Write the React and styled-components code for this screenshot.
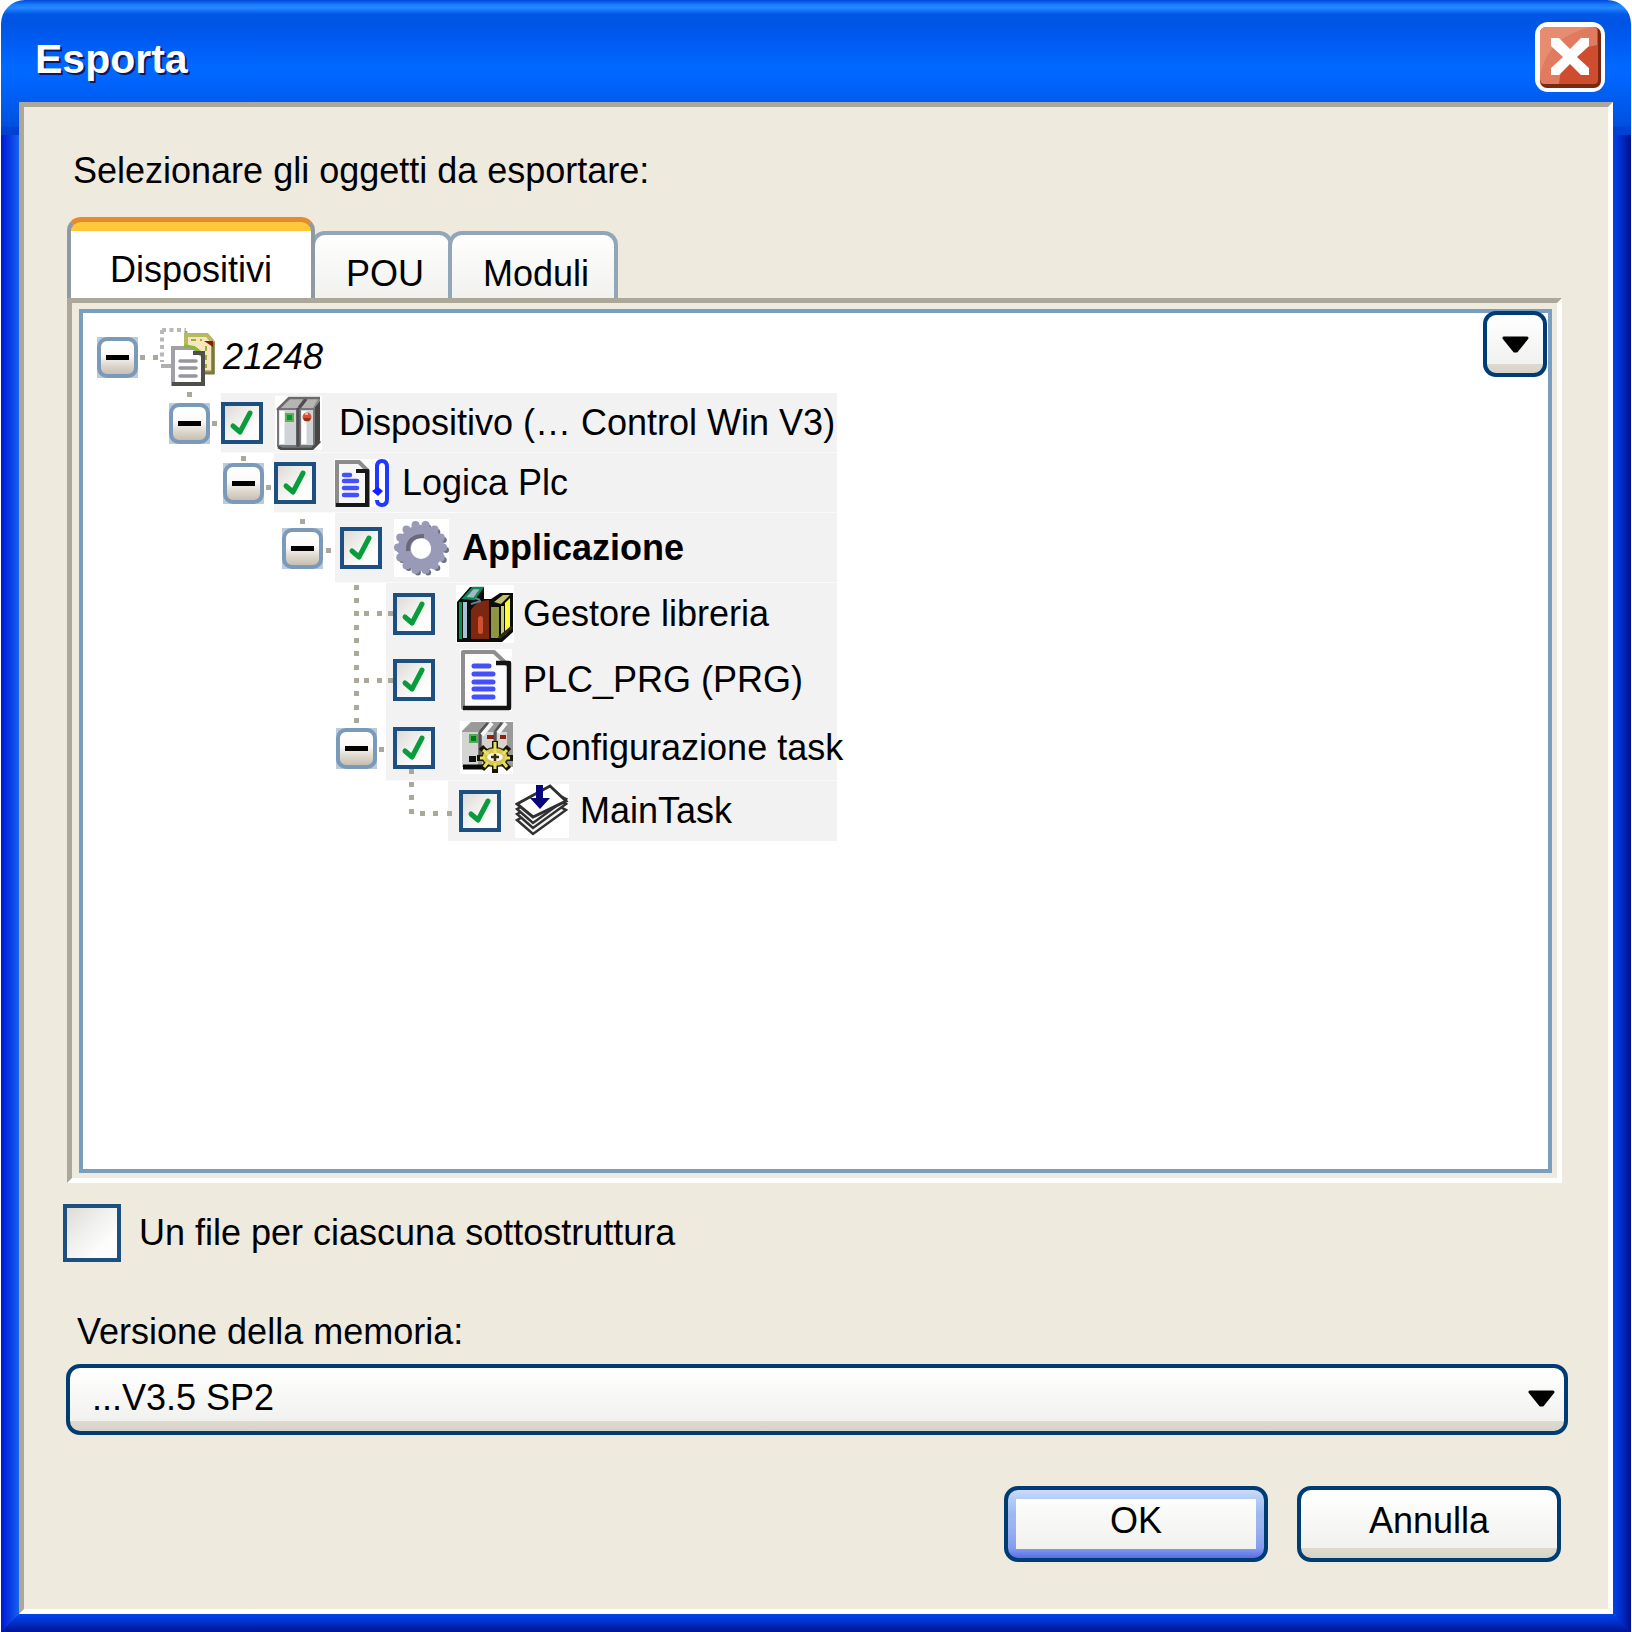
import React, { useState } from "react";
import styled, { createGlobalStyle } from "styled-components";

const Global = createGlobalStyle`
  *, *::before, *::after { box-sizing: border-box; }
  body { margin: 0; background: #fff; }
  body, button, select, input {
    font-family: "Liberation Sans", Arial, sans-serif;
    font-size: 36px;
    line-height: 48px;
    color: #000;
  }
`;

const Window = styled.main`
  position: relative;
  display: flex;
  flex-direction: column;
  min-height: 100vh;
  margin: 0 1px;
  padding: 0 18px 18px;
  border-radius: 24px 24px 0 0;
  background:
    linear-gradient(#0048d8, #1c80ff 5px, #2488ff 8px, #0058e6 14px, #0054e3 22px, #005cf4 44px, #0068ff 66px, #0066ff 78px, #005cf0 100px, #0050e0 126px, #0044d6 127px, #0040d0 135px) top / 100% 135px no-repeat,
    linear-gradient(#0045ee, #002cc0 10px, #001390) bottom / 100% 18px no-repeat;
  &::before, &::after {
    content: "";
    position: absolute;
    top: 135px;
    bottom: 0;
    width: 18px;
  }
  &::before {
    left: 0;
    background: linear-gradient(to right, #0018d4, #0b3ee4 10px, #1464f0);
    clip-path: polygon(0 0, 100% 0, 100% calc(100% - 18px), 0 100%);
  }
  &::after {
    right: 0;
    background: linear-gradient(to right, #0042ea, #0028c0 10px, #001088);
    clip-path: polygon(0 0, 100% 0, 100% 100%, 0 calc(100% - 18px));
  }
`;

const TitleBar = styled.header`
  display: flex;
  align-items: center;
  justify-content: space-between;
  height: 102px;
  padding: 12px 8px 0 16px;
`;

const Title = styled.h1`
  margin: 0;
  padding-top: 4px;
  font-size: 41px;
  line-height: 56px;
  font-weight: bold;
  color: #fff;
  text-shadow: 2px 2px 0 #0a1a60;
`;

const CloseButton = styled.button`
  display: block;
  width: 70px;
  height: 70px;
  padding: 0;
  border: 0;
  background: none;
  svg { display: block; }
`;

const Body = styled.section`
  flex: 1;
  display: flex;
  flex-direction: column;
  border: 5px solid;
  border-color: #aca899 #fff #fff #aca899;
  background: #eeeade;
  padding: 40px 40px 47px 39px;
`;

const Inset = styled.div`
  display: flex;
  flex-direction: column;
  flex: 1;
  padding: 0 6px 0 4px;
`;

const Prompt = styled.p`
  margin: 0 0 22px;
  padding-left: 6px;
`;

const Tabs = styled.div`
  display: flex;
  align-items: flex-end;
  height: 81px;
`;

const Tab = styled.button`
  height: ${(p) => (p.$active ? 81 : 67)}px;
  width: ${(p) => p.$width}px;
  margin-right: ${(p) => (p.$active ? 0 : -5)}px;
  padding: ${(p) => (p.$active ? "20px 0 0" : "15px 0 0 6px")};
  margin-left: ${(p) => (p.$joined ? -4 : 0)}px;
  border: 4px solid ${(p) => (p.$active ? "#8f99a3" : "#91a7b9")};
  border-bottom: 0;
  border-radius: 14px 14px 0 0;
  white-space: nowrap;
  text-align: center;
  background: linear-gradient(#fff, #fafaf9 30%, #f1f1ee);
  ${(p) =>
    p.$active &&
    `
    position: relative;
    z-index: 1;
    border-top: 5px solid #e68b2c;
    background: linear-gradient(#ffc83c 9px, #fff 9px);
  `}
`;

const Panel = styled.div`
  flex: 1;
  display: flex;
  border: 5px solid;
  border-color: #aca899 #fff #fff #aca899;
  padding: 6px 5px 5px 7px;
`;

const Tree = styled.div`
  position: relative;
  flex: 1;
  border: 4px solid #7a9ebf;
  background: #fff;
  padding-top: 8px;
`;

const Connectors = styled.svg`
  position: absolute;
  left: 0;
  top: 0;
  pointer-events: none;
`;

const Row = styled.div`
  display: flex;
  height: ${(p) => p.$height}px;
`;

const Lead = styled.div`
  display: flex;
  flex: none;
  align-items: center;
  justify-content: flex-end;
  width: ${(p) => p.$width}px;
  padding-right: ${(p) => p.$pad}px;
`;

const Band = styled.div`
  display: flex;
  align-items: center;
  width: ${(p) => p.$width}px;
  padding-left: ${(p) => p.$pad}px;
  background: ${(p) => (p.$plain ? "none" : "#f2f2f2")};
  border-bottom: ${(p) => (p.$line ? "1px solid #fafafa" : "0")};
`;

const IconCell = styled.span`
  flex: none;
  width: ${(p) => p.$width}px;
  margin-left: ${(p) => p.$gap}px;
  margin-right: ${(p) => p.$after}px;
  svg { display: block; width: 100%; height: auto; }
`;

const NodeLabel = styled.label`
  white-space: nowrap;
  font-weight: ${(p) => (p.$bold ? "bold" : "normal")};
  font-style: ${(p) => (p.$italic ? "italic" : "normal")};
`;

const Expander = styled.button`
  display: flex;
  align-items: center;
  justify-content: center;
  width: 41px;
  height: 41px;
  padding: 0;
  border: 4px solid #7b9ab9;
  border-radius: 10px;
  background: linear-gradient(#fff, #faf9f7 45%, #dcd6cc 75%, #c8bfb3);
  &::before {
    content: "";
    width: 23px;
    height: 5px;
    background: #000;
  }
`;

const ExpanderSlot = styled.span`
  display: block;
  background: #bccbdc;
`;

const CheckWrap = styled.span`
  position: relative;
  flex: none;
  display: block;
  width: ${(p) => p.$size}px;
  height: ${(p) => p.$size}px;
  input {
    display: block;
    appearance: none;
    width: 100%;
    height: 100%;
    margin: 0;
    border: 4px solid #1d5080;
    background: linear-gradient(135deg, #dedbd6, #efefec 40%, #fdfdfd 75%);
  }
  svg {
    position: absolute;
    inset: 0;
    pointer-events: none;
  }
`;

const DropButton = styled.button`
  position: absolute;
  top: -2px;
  right: 1px;
  display: flex;
  align-items: center;
  justify-content: center;
  width: 64px;
  height: 66px;
  padding: 0;
  border: 4px solid #003c74;
  border-radius: 13px;
  background: linear-gradient(#fff, #fafafa 30%, #f1f2ee 84%, #dedacf 84%, #d8d3c8);
`;

const Option = styled.div`
  display: flex;
  align-items: center;
  gap: 18px;
  margin-top: 21px;
`;

const FieldLabel = styled.label`
  margin: 46px 0 8px;
  padding-left: 14px;
`;

const SelectWrap = styled.div`
  position: relative;
  margin-left: 3px;
  select {
    display: block;
    appearance: none;
    width: 100%;
    height: 71px;
    padding: 0 60px 4px 22px;
    border: 4px solid #003c74;
    border-radius: 14px;
    background: linear-gradient(#fff 4px, #fafaf9 30%, #f1f2ee 84%, #dedacf 84%, #d8d3c8);
  }
  svg {
    position: absolute;
    right: 13px;
    top: 26px;
    pointer-events: none;
  }
`;

const Actions = styled.footer`
  display: flex;
  justify-content: flex-end;
  gap: 29px;
  margin-top: 51px;
  padding-right: 7px;
`;

const Action = styled.button`
  width: 264px;
  height: 76px;
  padding: 0 0 6px;
  border: 4px solid #003c74;
  border-radius: 14px;
  background: linear-gradient(#fff 6px, #fafaf9 30%, #f1f2ee 86%, #dedacf 86%, #d8d3c8);
  ${(p) =>
    p.$primary &&
    `
    background:
      linear-gradient(#fdfdfd, #fafaf9 20%, #f1f2ee) center / 240px 50px no-repeat,
      linear-gradient(#ccdaf6, #b4ccf6 9px, #9cb8f0 24px, #9cb4f0 36px, #849cf0 58px, #5870e4);
  `}
`;

const Arrow = () => (
  <svg width="27" height="17" viewBox="0 0 27 17" aria-hidden="true">
    <path d="M2 2H25L14.5 15H12.5Z" stroke="#000" strokeWidth="3" strokeLinejoin="round" />
  </svg>
);

const CloseIcon = () => (
  <svg width="70" height="70" viewBox="0 0 70 70" aria-hidden="true">
    <rect width="70" height="70" rx="13" fill="#fff" />
    <rect x="5" y="5" width="61" height="61" rx="7" fill="#7c2810" />
    <path d="M12 5H59Q63 5 63 9V58Q63 62 59 62H8Q5 62 5 56V12Q5 5 12 5Z" fill="#cf4d2f" />
    <path d="M12 5H59Q62 5 62 9V23Q26 28 24 62H9Q5 61 5 56V12Q5 5 12 5Z" fill="#e27a60" />
    <path d="M12 5H56Q12 15 5 54V12Q5 5 12 5Z" fill="#e68c70" />
    <path d="M16 16H24L35 27L46 16H54V24L42 35L54 46V53H46L35 42L24 53H16V46L28 35L16 24Z" fill="#fff" />
  </svg>
);

const Tick = () => (
  <svg width="41" height="41" viewBox="0 0 41 41" aria-hidden="true">
    <path d="M12 24L19 30L29 11" fill="none" stroke="#089c3c" strokeWidth="5" strokeLinecap="round" strokeLinejoin="round" />
  </svg>
);

const ProjectIcon = () => (
  <svg viewBox="0 0 56 58">
    <path d="M2 2H26M2 2V34" stroke="#b8b8b8" strokeWidth="4" strokeDasharray="4 3.5" fill="none" />
    <path d="M1 38H11" stroke="#b0b0b0" strokeWidth="4" />
    <path d="M26 3V8" stroke="#9aa888" strokeWidth="3" />
    <path d="M26 7H47L53 14V44H26Z" fill="#f6e6bc" stroke="#b8b860" strokeWidth="4" />
    <path d="M31 12H42M46 18V40" stroke="#98b038" strokeWidth="2" strokeDasharray="5 4" />
    <path d="M53 14V45H42" fill="none" stroke="#7a7450" strokeWidth="3" />
    <path d="M44 13H53V19Z" fill="#802010" />
    <path d="M13 20H34L43 28V56H13Z" fill="#fff" stroke="#a0a0a6" strokeWidth="4" />
    <path d="M24 18Q34 18 40 24" fill="none" stroke="#88b838" strokeWidth="3" />
    <path d="M33 25H43V56H12" fill="none" stroke="#4e4e4a" strokeWidth="4" />
    <path d="M20 33H36M20 40H36M20 48H36" stroke="#96969c" strokeWidth="3.5" strokeLinecap="round" />
  </svg>
);

const DeviceIcon = () => (
  <svg viewBox="0 0 47 54">
    <rect width="47" height="54" fill="#fff" />
    <path d="M3 13L14 2H45V44L38 52H3Z" fill="#8a8a88" />
    <path d="M38 14L45 5V44L38 52Z" fill="#484644" />
    <path d="M5 12L15 3H28L22 12ZM26 12L33 3H43L38 12Z" fill="#b4b4b2" />
    <path d="M3 13H22V50H3ZM25 13H39V50H25Z" fill="#cfd3d6" stroke="#77777b" strokeWidth="2" />
    <path d="M7 15V48M29 15V48" stroke="#fff" strokeWidth="5" />
    <path d="M23 12V51M24 12L31 3" stroke="#4e4e4e" strokeWidth="3" />
    <path d="M3 51L7 53H37L45 45" stroke="#4a4a48" strokeWidth="3" fill="none" />
    <path d="M2 14L14 2H45" stroke="#6a6a68" strokeWidth="2.5" fill="none" />
    <rect x="10" y="17" width="9" height="9" fill="#60b050" />
    <rect x="12" y="19" width="5" height="5" fill="#009838" />
    <circle cx="32" cy="21" r="4.5" fill="#d85030" />
    <path d="M28 22H36L34 25H30Z" fill="#903018" />
    <path d="M30 18H33" stroke="#f4b0a0" strokeWidth="2" />
  </svg>
);

const LogicIcon = () => (
  <svg viewBox="0 0 55 48">
    <rect width="55" height="48" fill="#fff" />
    <path d="M3 3H25L34 12V46H3Z" fill="#f6f6f6" stroke="#8c8c8c" strokeWidth="4" />
    <path d="M22 12H33V46H2" fill="none" stroke="#181818" strokeWidth="4" />
    <path d="M10 16H16M10 22H23M10 29H23M10 36H23" stroke="#4450ff" strokeWidth="4.5" strokeLinecap="round" />
    <path d="M43 31V8Q43 2 48 2Q53 2 53 8V40Q53 46 48 46Q43 46 43 41" fill="none" stroke="#2038ff" strokeWidth="4" />
    <path d="M38 32L44 28L49 32L44 37Z" fill="#1020ff" />
  </svg>
);

const teeth = Array.from({ length: 14 }, (_, i) => (i * Math.PI * 2) / 14);

const GearIcon = () => (
  <svg viewBox="0 0 55 58">
    <rect width="55" height="58" fill="#fff" />
    {teeth.map((a) => (
      <circle key={"s" + a} cx={29 + 23 * Math.cos(a)} cy={31 + 23 * Math.sin(a)} r="3" fill="#6c7080" />
    ))}
    {teeth.map((a) => (
      <circle key={"t" + a} cx={26.5 + 22.5 * Math.cos(a)} cy={28.5 + 23 * Math.sin(a)} r="4" fill="#989ab8" />
    ))}
    <circle cx="27" cy="29" r="16.5" fill="none" stroke="#989ab8" strokeWidth="13" />
    <path d="M14 32Q13 17 30 17" fill="none" stroke="#686a78" strokeWidth="4" />
    <circle cx="27" cy="30" r="10" fill="#fff" />
  </svg>
);

const LibraryIcon = () => (
  <svg viewBox="0 0 58 58">
    <rect width="58" height="58" fill="#fff" />
    <path d="M1 17L14 2H28V14H35L44 8H57V47L46 57H1Z" fill="#0c0c0c" />
    <path d="M8 13L17 3H26L18 14Z" fill="#a0b8c8" stroke="#108858" strokeWidth="2.5" />
    <path d="M3 17H6V54H3Z" fill="#009850" />
    <path d="M7 17H11V53H7Z" fill="#a8c0d8" />
    <path d="M15 25Q21 15 33 15V54H15Z" fill="#7c2810" />
    <rect x="22" y="31" width="5" height="18" rx="2.5" fill="#d05030" />
    <path d="M35 22H43V53H35Z" fill="#8e9444" />
    <path d="M38 17L47 10H54L45 19Z" fill="#c0c070" />
    <path d="M45 21H48V51H45Z" fill="#c8cc70" />
    <path d="M49 18L54 13V44L49 50Z" fill="#ffff30" />
    <path d="M43 53L56 42" stroke="#302810" strokeWidth="3" />
    <path d="M15 19L25 16M19 13L24 15" stroke="#608090" strokeWidth="2" />
  </svg>
);

const DocumentIcon = () => (
  <svg viewBox="0 0 52 62">
    <rect width="52" height="62" fill="#fff" />
    <path d="M3 3H34L49 17V59H3Z" fill="#fcfcff" stroke="#8e8e8e" strokeWidth="4" strokeLinejoin="round" />
    <path d="M36 14H49V59H3" fill="none" stroke="#141414" strokeWidth="4.5" strokeLinejoin="round" />
    <path d="M14 17H29M14 25H33M14 33H33M14 40H33M14 48H33" stroke="#4450ff" strokeWidth="5" strokeLinecap="round" />
  </svg>
);

const TaskConfigIcon = () => (
  <svg viewBox="0 0 53 53">
    <rect width="53" height="53" fill="#fff" />
    <path d="M2 10L11 1H53V46H2Z" fill="#9a9a9a" />
    <path d="M2 11H18V45H2ZM22 11H34V45H22ZM37 11H47V40H37Z" fill="#d4d4d2" />
    <path d="M20 11L28 2M35 11L42 2M20 11V40M35 11V25" stroke="#555" strokeWidth="3" />
    <path d="M22 14L32 2M38 12L46 2" stroke="#f8f8f8" strokeWidth="4" />
    <path d="M3 46H24" stroke="#080808" strokeWidth="5" />
    <path d="M9 38H16" stroke="#101010" strokeWidth="6" />
    <rect x="9" y="13" width="9" height="9" fill="#50b050" />
    <rect x="11" y="15" width="5" height="5" fill="#007828" />
    <path d="M27 16H34M40 16H46" stroke="#902010" strokeWidth="4" />
    <ellipse cx="35" cy="36" rx="14" ry="10" fill="#3a3000" />
    <path d="M21 26L27 32M49 26L43 32M17 37H24M53 37H46M22 48L28 42M49 48L43 42M35 44V52M35 20V30" stroke="#181400" strokeWidth="6" />
    <ellipse cx="35" cy="36" rx="10" ry="6.5" fill="#fff" stroke="#d8c850" strokeWidth="4.5" />
    <path d="M23 29L28 33M47 29L43 33M20 37H25M50 37H45M24 46L28 41M47 46L43 41M35 42V48M35 21V33" stroke="#e8e060" strokeWidth="3" />
    <path d="M31 36H39M35 33V40" stroke="#402800" strokeWidth="2.5" />
  </svg>
);

const LayersIcon = () => (
  <svg viewBox="0 0 54 54">
    <rect width="54" height="54" fill="#fff" />
    {[36, 30, 25].map((y) => (
      <path key={y} d={`M2 ${y}L35 ${y - 18}L51 ${y - 10}L18 ${y + 14}Z`} fill="#f4f4f4" stroke="#303030" strokeWidth="2.5" />
    ))}
    <path d="M2 20L35 2L51 17L18 33Z" fill="#fff" stroke="#303030" strokeWidth="3" />
    <path d="M21 1H28V14H35L25 25L15 14H21Z" fill="#08087c" />
  </svg>
);

const nodes = [
  { id: "root", label: "21248", height: 72, lead: 55, pad: 0, open: true, plain: true, icon: ProjectIcon, iw: 56, gap: 22, after: 7, italic: true },
  { id: "device", label: "Dispositivo (… Control Win V3)", height: 60, lead: 138, pad: 11, open: true, check: true, icon: DeviceIcon, iw: 47, bandPad: 0, gap: 12, after: 17, line: true },
  { id: "logic", label: "Logica Plc", height: 60, lead: 191, pad: 10, open: true, check: true, icon: LogicIcon, iw: 55, bandPad: 0, gap: 18, after: 13, line: true },
  { id: "app", label: "Applicazione", height: 70, lead: 252, pad: 12, open: true, check: true, icon: GearIcon, iw: 55, bandPad: 5, gap: 12, after: 13, bold: true, line: true },
  { id: "library", label: "Gestore libreria", height: 62, lead: 303, pad: 0, check: true, icon: LibraryIcon, iw: 58, bandPad: 7, gap: 21, after: 9 },
  { id: "prg", label: "PLC_PRG (PRG)", height: 70, lead: 303, pad: 0, check: true, icon: DocumentIcon, iw: 52, bandPad: 7, gap: 25, after: 11 },
  { id: "tasks", label: "Configurazione task", height: 66, lead: 303, pad: 9, open: true, check: true, icon: TaskConfigIcon, iw: 53, bandPad: 7, gap: 25, after: 12, line: true },
  { id: "main", label: "MainTask", height: 60, lead: 365, pad: 0, check: true, icon: LayersIcon, iw: 54, bandPad: 11, gap: 14, after: 11 },
];

const bandEnd = 754;

const dots = [
  [57, 42], [70, 42], [104, 79], [129, 108], [158, 143], [183, 172], [217, 206], [243, 235],
  ...[272, 285, 298, 312, 325, 338, 352, 365, 378, 392, 405].map((y) => [271, y]),
  [281, 298], [294, 298], [305, 298], [281, 365], [294, 365], [305, 365],
  [296, 434], [326, 456], [326, 469], [326, 482], [326, 496], [337, 498], [350, 498], [364, 498],
];

function Check({ size, id, checked, onChange }) {
  return (
    <CheckWrap $size={size}>
      <input type="checkbox" id={id} checked={checked} onChange={onChange} />
      {checked && <Tick />}
    </CheckWrap>
  );
}

export default function App() {
  const [checked, setChecked] = useState(() => Object.fromEntries(nodes.map((n) => [n.id, !!n.check])));
  const [single, setSingle] = useState(false);
  const toggle = (id) => setChecked((c) => ({ ...c, [id]: !c[id] }));

  return (
    <>
      <Global />
      <Window>
        <TitleBar>
          <Title>Esporta</Title>
          <CloseButton aria-label="Chiudi"><CloseIcon /></CloseButton>
        </TitleBar>
        <Body>
          <Inset>
            <Prompt>Selezionare gli oggetti da esportare:</Prompt>
            <Tabs role="tablist">
              <Tab role="tab" aria-selected="true" $active $width={248}>Dispositivi</Tab>
              <Tab role="tab" aria-selected="false" $joined $width={142}>POU</Tab>
              <Tab role="tab" aria-selected="false" $width={170}>Moduli</Tab>
            </Tabs>
            <Panel role="tabpanel">
              <Tree>
                {nodes.map((n) => {
                  const Icon = n.icon;
                  return (
                    <Row key={n.id} $height={n.height}>
                      <Lead $width={n.lead} $pad={n.pad}>
                        {n.open && (
                          <ExpanderSlot>
                            <Expander aria-label={"Comprimi " + n.label} />
                          </ExpanderSlot>
                        )}
                      </Lead>
                      <Band $width={bandEnd - n.lead} $pad={n.bandPad || 0} $plain={n.plain} $line={n.line}>
                        {n.check && <Check size={42} id={n.id} checked={checked[n.id]} onChange={() => toggle(n.id)} />}
                        <IconCell $width={n.iw} $gap={n.gap} $after={n.after}><Icon /></IconCell>
                        <NodeLabel as={n.check ? "label" : "span"} htmlFor={n.check ? n.id : undefined} $bold={n.bold} $italic={n.italic}>
                          {n.label}
                        </NodeLabel>
                      </Band>
                    </Row>
                  );
                })}
                <Connectors width="380" height="520" aria-hidden="true">
                  {dots.map(([x, y]) => (
                    <rect key={x + "-" + y} x={x} y={y} width="5" height="5" fill="#aca899" />
                  ))}
                </Connectors>
                <DropButton aria-label="Opzioni"><Arrow /></DropButton>
              </Tree>
            </Panel>
          </Inset>
          <Option>
            <Check size={58} id="single" checked={single} onChange={() => setSingle(!single)} />
            <label htmlFor="single">Un file per ciascuna sottostruttura</label>
          </Option>
          <FieldLabel htmlFor="version">Versione della memoria:</FieldLabel>
          <SelectWrap>
            <select id="version" defaultValue="sp2">
              <option value="sp2">...V3.5 SP2</option>
            </select>
            <Arrow />
          </SelectWrap>
          <Actions>
            <Action $primary>OK</Action>
            <Action>Annulla</Action>
          </Actions>
        </Body>
      </Window>
    </>
  );
}
